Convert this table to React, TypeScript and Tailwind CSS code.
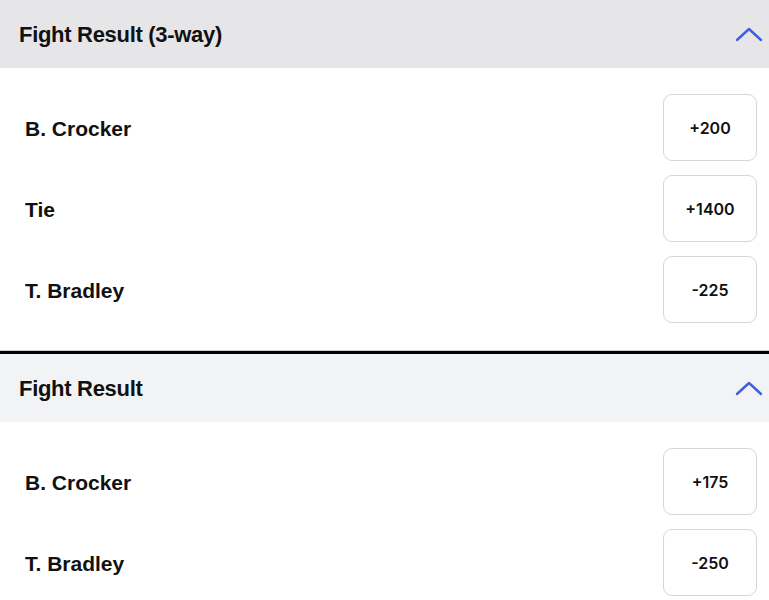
import React from "react";

type Row = { name: string; odds: string };

function Chevron() {
  return (
    <svg width="28" height="16" viewBox="0 0 28 16" fill="none">
      <path d="M2 14 L14 3 L26 14" stroke="#3f5ee0" strokeWidth="2.4" strokeLinecap="round" strokeLinejoin="round" />
    </svg>
  );
}

function Section({ title, rows, headerBg }: { title: string; rows: Row[]; headerBg: string }) {
  return (
    <div>
      <div className={`h-[68px] flex items-center justify-between pl-[19px] pr-[6px] ${headerBg}`}>
        <span className="text-[22px] font-bold text-[#111] tracking-[-0.3px]" style={{ fontFamily: '"Liberation Sans", Arial, sans-serif' }}>
          {title}
        </span>
        <Chevron />
      </div>
      <div className="bg-white pt-[26px] pb-[27px] flex flex-col gap-[14px]">
        {rows.map((r) => (
          <div key={r.name} className="flex items-center justify-between pl-[25px] pr-[12px]">
            <span className="text-[21px] font-bold text-[#111] pt-[2px]" style={{ fontFamily: '"Liberation Sans", Arial, sans-serif' }}>
              {r.name}
            </span>
            <div className="w-[94px] h-[67px] rounded-[9px] border border-[#d6d6d6] flex items-center justify-center">
              <span className="text-[16px] font-semibold text-[#111]" style={{ fontFamily: 'Inter, "Liberation Sans", sans-serif' }}>
                {r.odds}
              </span>
            </div>
          </div>
        ))}
      </div>
    </div>
  );
}

export default function App() {
  return (
    <div className="w-[769px] h-[600px] overflow-hidden bg-white">
      <Section
        title="Fight Result (3-way)"
        headerBg="bg-[#e6e6e8]"
        rows={[
          { name: "B. Crocker", odds: "+200" },
          { name: "Tie", odds: "+1400" },
          { name: "T. Bradley", odds: "-225" },
        ]}
      />
      <div className="h-px bg-[#cfcfcf]" />
      <div className="h-[3px] bg-black" />
      <Section
        title="Fight Result"
        headerBg="bg-[#f2f3f5]"
        rows={[
          { name: "B. Crocker", odds: "+175" },
          { name: "T. Bradley", odds: "-250" },
        ]}
      />
    </div>
  );
}
